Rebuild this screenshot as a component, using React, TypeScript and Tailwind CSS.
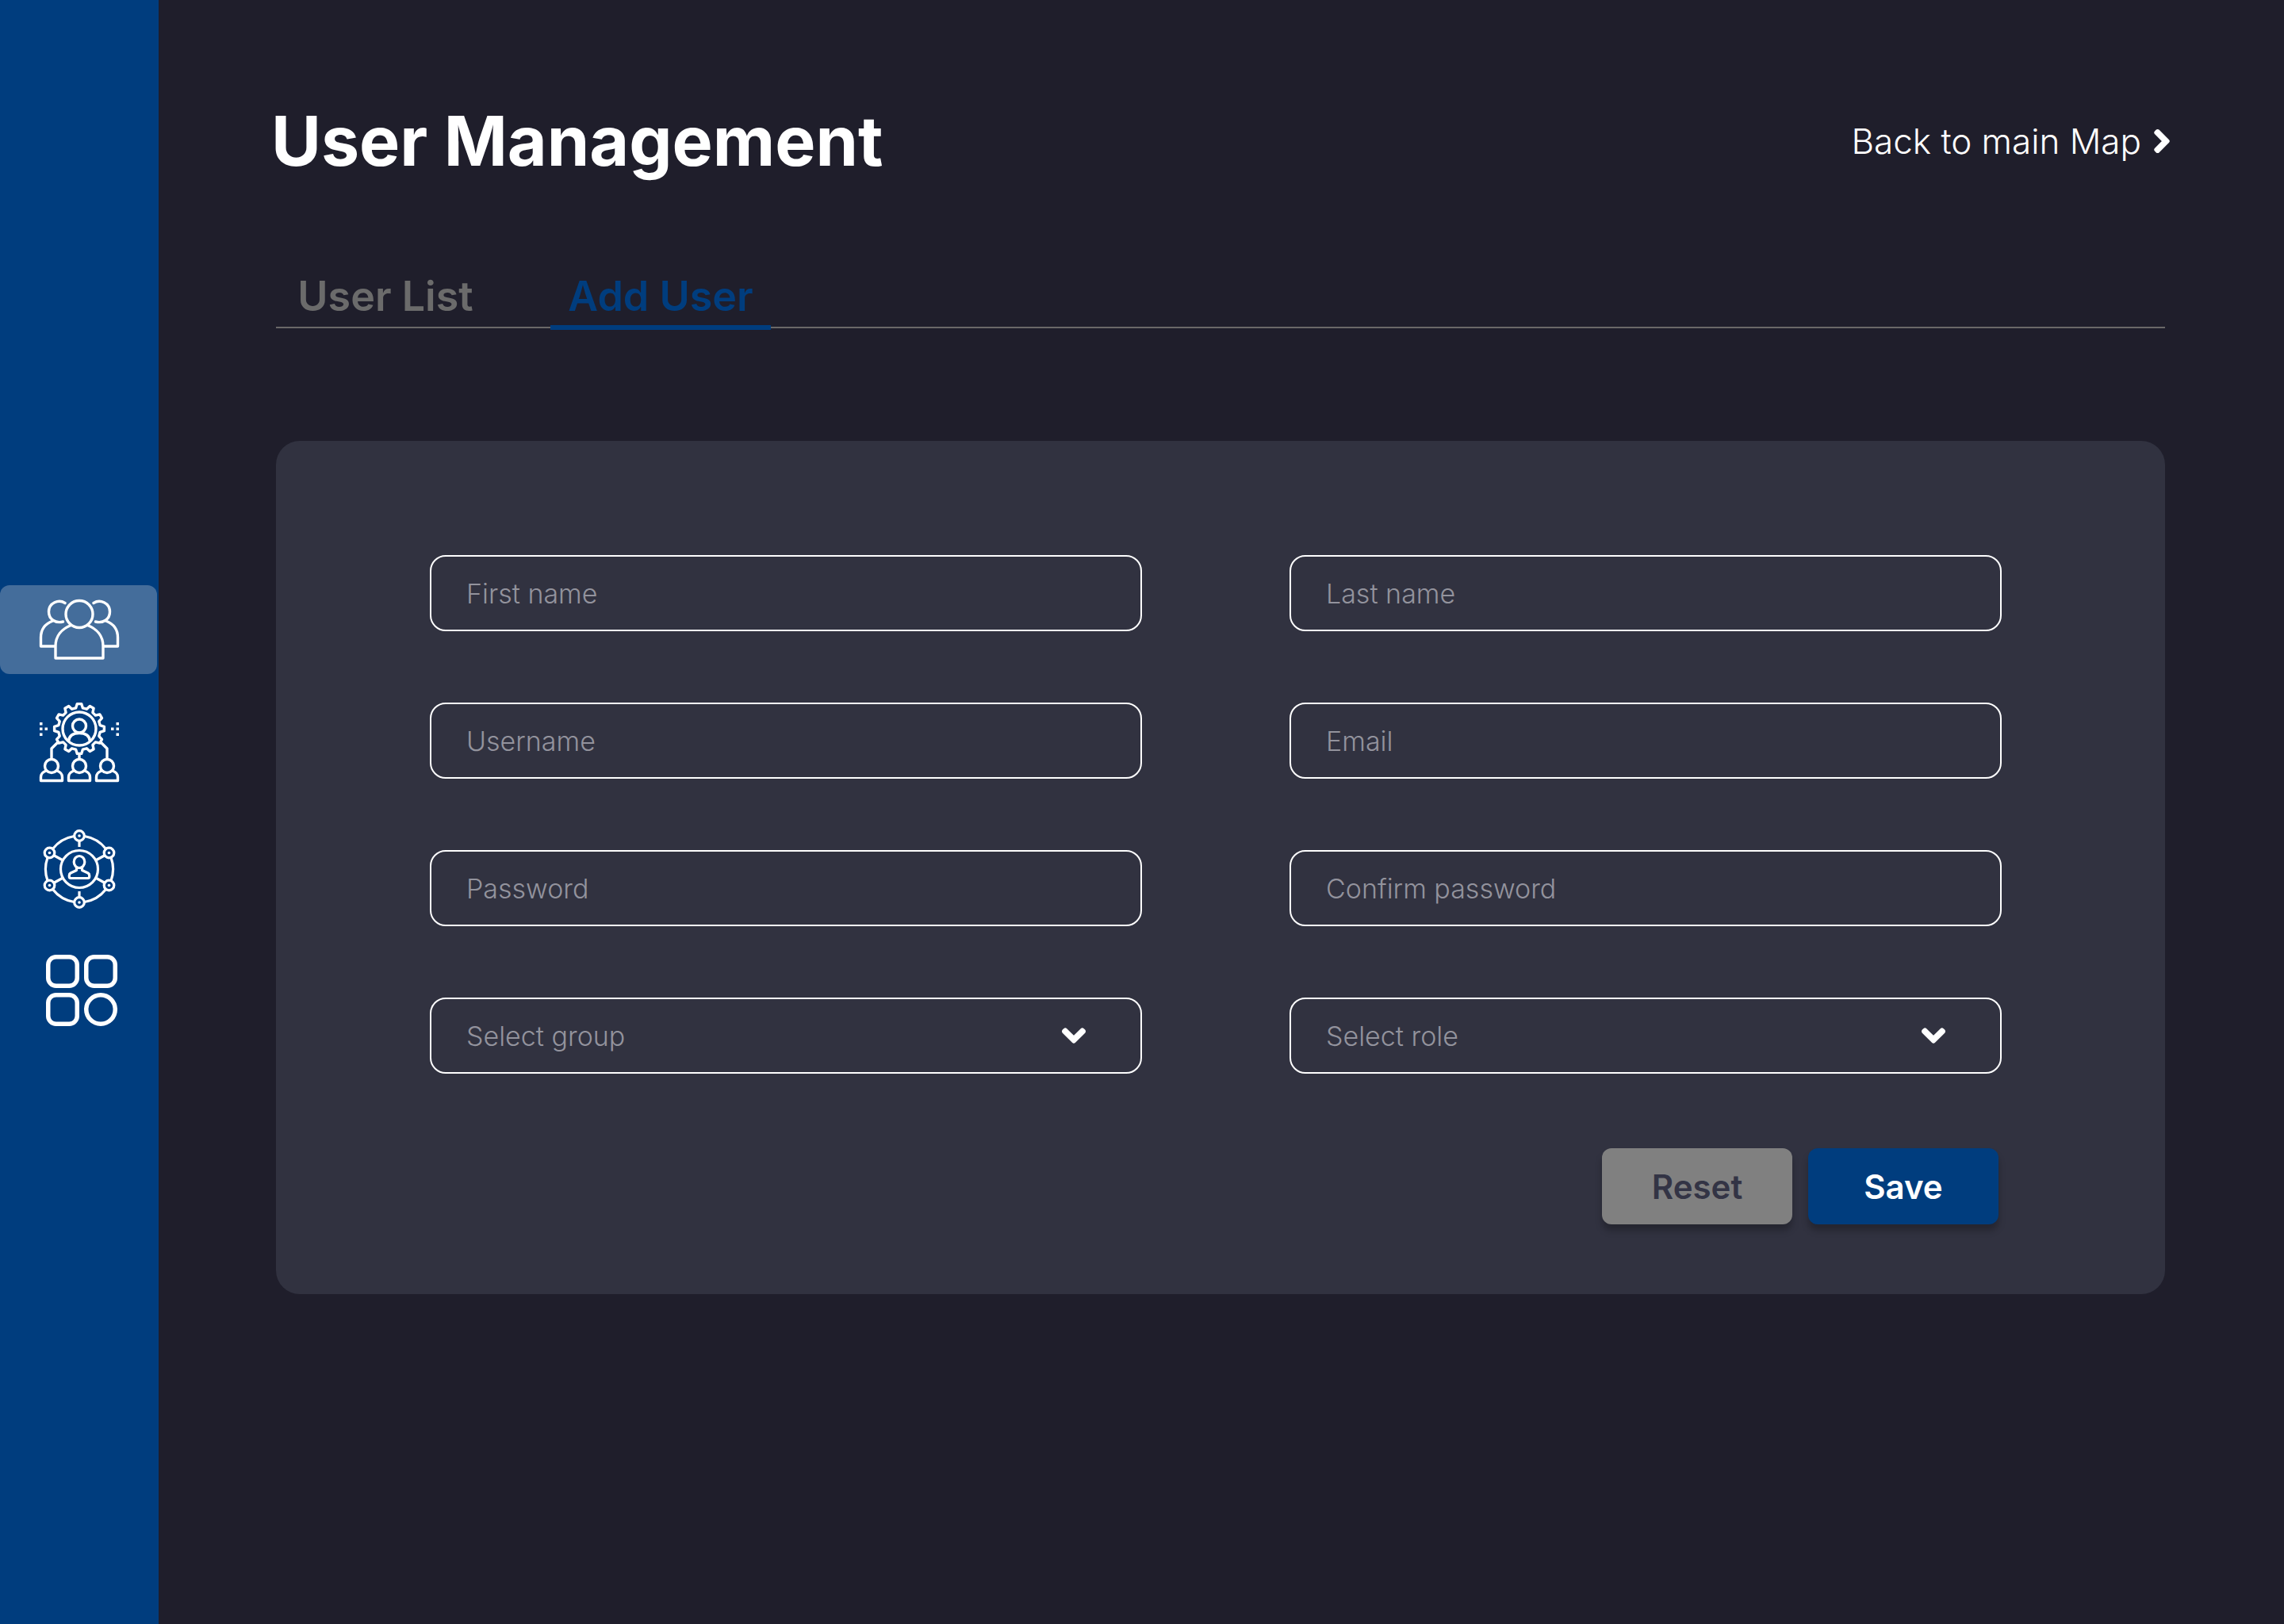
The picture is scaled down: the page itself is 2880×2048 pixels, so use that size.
import type { ReactNode } from 'react';
import { FaChevronDown, FaChevronRight } from 'react-icons/fa';

const gearPath = (() => {
  const points: string[] = [];
  const teeth = 12;
  for (let i = 0; i < teeth; i++) {
    const middle = (i * 360) / teeth - 90;
    const corners: [number, number][] = [
      [-9.5, 26.5],
      [-5, 31.5],
      [5, 31.5],
      [9.5, 26.5],
    ];
    for (const [offset, radius] of corners) {
      const angle = ((middle + offset) * Math.PI) / 180;
      points.push(`${(70 + radius * Math.cos(angle)).toFixed(1)} ${(49 + radius * Math.sin(angle)).toFixed(1)}`);
    }
  }
  return `M${points.join('L')}Z`;
})();

function UsersIcon() {
  return (
    <svg viewBox="0 18 200 112" className="h-28 w-[200px] shrink-0" fill="none" stroke="currentColor" strokeWidth="3.4" strokeLinecap="round" strokeLinejoin="round" aria-hidden="true">
      <circle cx="100" cy="54.5" r="17" />
      <path d="M89.5 68.5C78 73 70 82 70 95V110H130V95C130 82 122 73 110.5 68.5" />
      <path d="M82 40.5C74 35.5 61.5 40 61.5 51.5C61.5 61 70 66.5 79.5 64" />
      <path d="M118 40.5C126 35.5 138.5 40 138.5 51.5C138.5 61 130 66.5 120.5 64" />
      <path d="M66.5 63C56 67 51.5 75 51.5 84V95H69" />
      <path d="M133.5 63C144 67 148.5 75 148.5 84V95H131" />
    </svg>
  );
}

function TeamIcon() {
  return (
    <svg viewBox="0 12 140 112" className="h-28 w-[140px] shrink-0" fill="none" stroke="currentColor" strokeWidth="3.4" strokeLinejoin="round" aria-hidden="true">
      <path d={gearPath} />
      <circle cx="70" cy="49" r="21" />
      <circle cx="70" cy="45.5" r="8.5" />
      <path d="M56.5 65C57 58 62 54.5 70 54.5S83 58 83.5 65" />
      <path d="M70 80V87M43 66L35 74V87M97 66L105 74V87" />
      {[35, 70, 105].map((x) => (
        <g key={x} transform={`translate(${x} 0)`}>
          <circle cx="0" cy="96" r="8.5" />
          <path d="M-7 102C-11 103.5 -13.5 106 -13.5 110V114.5H13.5V110C13.5 106 11 103.5 7 102" />
        </g>
      ))}
      <g fill="currentColor" stroke="none">
        <path d="M20 41h3.5v3.5h-3.5zM20 47.5h3.5v3.5h-3.5zM20 54.5h3.5v3.5h-3.5zM26.5 47.5h3.5v3.5h-3.5z" />
        <path d="M116.5 41h3.5v3.5h-3.5zM116.5 47.5h3.5v3.5h-3.5zM116.5 54.5h3.5v3.5h-3.5zM110 47.5h3.5v3.5h-3.5z" />
      </g>
    </svg>
  );
}

const nodes: [number, number][] = [
  [70, 24],
  [107.5, 45.5],
  [107.5, 86.5],
  [70, 108],
  [32.5, 86.5],
  [32.5, 45.5],
];

function NetworkIcon() {
  return (
    <svg viewBox="0 12 140 112" className="h-28 w-[140px] shrink-0" fill="none" stroke="currentColor" strokeWidth="3.2" strokeLinejoin="round" aria-hidden="true">
      <path d="M76.5 24.5A43 43 0 0 1 103.5 40.5M110 51.5A43 43 0 0 1 110 80.5M103.5 91.5A43 43 0 0 1 76.5 107.5M63.5 107.5A43 43 0 0 1 36.5 91.5M30 80.5A43 43 0 0 1 30 51.5M36.5 40.5A43 43 0 0 1 63.5 24.5" />
      <circle cx="70" cy="66" r="23.5" />
      <path d="M70 30.5V38M70 94V101.5M38.5 49L48.5 54.5M101.5 49L91.5 54.5M38.5 83L48.5 77.5M101.5 83L91.5 77.5" />
      {nodes.map(([x, y]) => (
        <g key={`${x}-${y}`}>
          <circle cx={x} cy={y} r="6.3" />
          <circle cx={x} cy={y} r="1.8" fill="currentColor" stroke="none" />
        </g>
      ))}
      <ellipse cx="70" cy="57" rx="6.8" ry="7.5" />
      <path d="M66.5 63.5V67.5L59 71Q57.3 72 57.3 74V75.5Q57.3 77.5 59.3 77.5H80.7Q82.7 77.5 82.7 75.5V74Q82.7 72 81 71L73.5 67.5V63.5" />
    </svg>
  );
}

function AppsIcon() {
  return (
    <svg viewBox="0 14 140 112" className="h-28 w-[140px] shrink-0" fill="none" stroke="currentColor" strokeWidth="5.5" aria-hidden="true">
      <rect x="30.75" y="26.75" width="36.5" height="36.5" rx="10" />
      <rect x="78.75" y="26.75" width="36.5" height="36.5" rx="10" />
      <rect x="30.75" y="74.75" width="36.5" height="36.5" rx="10" />
      <circle cx="97" cy="93" r="18.25" />
    </svg>
  );
}

function NavItem({ label, active, className = '', children }: { label: string; active?: boolean; className?: string; children: ReactNode }) {
  return (
    <button
      type="button"
      aria-label={label}
      aria-current={active ? 'page' : undefined}
      className={`flex h-28 items-center rounded-xl ${active ? 'mr-0.5 justify-start bg-[#446d9b]' : 'justify-center'} ${className}`}
    >
      {children}
    </button>
  );
}

const fieldClass =
  'h-24 w-full appearance-none rounded-[20px] border-2 border-white bg-transparent px-11 text-[34px] font-light text-[#93939d] outline-none placeholder:text-[#93939d] placeholder:opacity-100';

function TextField({ label, type = 'text' }: { label: string; type?: string }) {
  return <input type={type} aria-label={label} placeholder={label} className={fieldClass} />;
}

function SelectField({ label }: { label: string }) {
  return (
    <div className="relative">
      <select aria-label={label} defaultValue="" className={fieldClass}>
        <option value="">{label}</option>
      </select>
      <FaChevronDown strokeWidth="44" className="pointer-events-none absolute top-8 right-[70px] size-8 overflow-visible text-white" aria-hidden="true" />
    </div>
  );
}

export default function App() {
  return (
    <div className="flex min-h-screen bg-[#1f1e2b] font-['Inter',sans-serif] text-white">
      <nav aria-label="Main" className="flex w-[200px] shrink-0 flex-col bg-[#003d7e] pt-[738px]">
        <NavItem label="User management" active>
          <UsersIcon />
        </NavItem>
        <NavItem label="Groups" className="mt-8">
          <TeamIcon />
        </NavItem>
        <NavItem label="Roles" className="mt-12">
          <NetworkIcon />
        </NavItem>
        <NavItem label="Applications" className="mt-10">
          <AppsIcon />
        </NavItem>
      </nav>

      <main className="min-w-0 flex-1 pr-[150px] pb-16 pl-[148px]">
        <header className="-mx-1.5 flex items-center justify-between pt-32">
          <h1 className="text-[86px] leading-[100px] font-bold">User Management</h1>
          <a href="#map" className="flex items-center gap-4 text-[44px] font-light">
            Back to main Map
            <FaChevronRight strokeWidth="44" className="h-8 w-5 overflow-visible" aria-hidden="true" />
          </a>
        </header>

        <div role="tablist" className="mt-[100px] flex h-[86px] items-stretch border-b-2 border-[#6a6868] text-[52px] leading-[84px] font-semibold">
          <button type="button" role="tab" aria-selected="false" className="w-[276px] pt-1 text-[#6b6b6b]">
            User List
          </button>
          <button type="button" role="tab" aria-selected="true" className="-mb-1 ml-[70px] w-[278px] border-b-6 border-[#003d7e] pt-1 text-[#003d7e]">
            Add User
          </button>
        </div>

        <form className="mt-[142px] rounded-[30px] bg-[#313240] pt-36 pr-[206px] pb-[88px] pl-[194px]">
          <div className="grid grid-cols-2 gap-x-[186px] gap-y-[90px]">
            <TextField label="First name" />
            <TextField label="Last name" />
            <TextField label="Username" />
            <TextField label="Email" type="email" />
            <TextField label="Password" type="password" />
            <TextField label="Confirm password" type="password" />
            <SelectField label="Select group" />
            <SelectField label="Select role" />
          </div>
          <div className="mt-[94px] mr-1 flex justify-end gap-5 text-[42px] font-semibold">
            <button type="reset" className="h-24 w-60 rounded-xl bg-[#808080] text-[#333445] shadow-[0_8px_8px_rgba(0,0,0,0.25)]">
              Reset
            </button>
            <button type="submit" className="h-24 w-60 rounded-xl bg-[#003d7e] text-white shadow-[0_8px_8px_rgba(0,0,0,0.25)]">
              Save
            </button>
          </div>
        </form>
      </main>
    </div>
  );
}
